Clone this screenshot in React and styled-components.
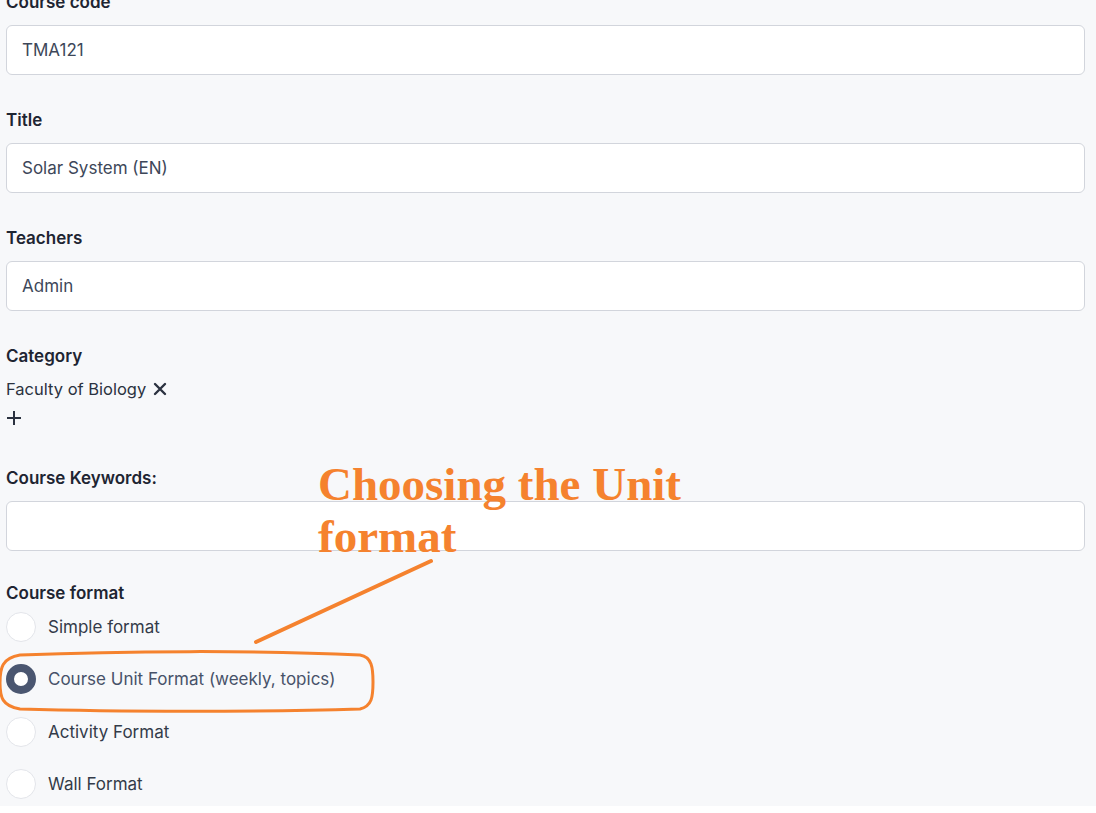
import React from 'react';
import styled, { createGlobalStyle } from 'styled-components';

const GlobalStyle = createGlobalStyle`
  html, body {
    margin: 0;
    padding: 0;
    background: #ffffff;
  }
  body {
    font-family: Inter, "Noto Sans", "Liberation Sans", sans-serif;
  }
`;

const Page = styled.div`
  position: relative;
  height: 806px;
  overflow: hidden;
  background: #f7f8fa;
`;

const Form = styled.div`
  display: flex;
  flex-direction: column;
  gap: 33px;
  margin-top: -10px;
  padding: 0 11px 0 6px;
`;

const Field = styled.div`
  display: flex;
  flex-direction: column;
  gap: ${(p) => p.gap || 11}px;
  margin-top: ${(p) => p.shift || 0}px;
`;

const Label = styled.div`
  font-size: 17px;
  line-height: 24px;
  font-weight: 600;
  color: #1e2532;
`;

const Input = styled.div`
  box-sizing: border-box;
  height: 50px;
  display: flex;
  align-items: center;
  padding: 0 15px;
  background: #ffffff;
  border: 1px solid #d2d5dc;
  border-radius: 6px;
  font-size: 17px;
  color: #3d4759;
`;

const Tag = styled.div`
  display: flex;
  align-items: center;
  gap: 7px;
  font-size: 16.5px;
  line-height: 22px;
  color: #2b3240;
`;

const IconButton = styled.span`
  display: inline-flex;
  color: #2b3240;
`;

const Radios = styled.div`
  display: flex;
  flex-direction: column;
  gap: 22.4px;
`;

const RadioRow = styled.label`
  display: flex;
  align-items: center;
  gap: 12px;
  font-size: 17px;
  color: ${(p) => (p.checked ? '#475269' : '#333b49')};
`;

const Circle = styled.span`
  box-sizing: border-box;
  width: 30px;
  height: 30px;
  border-radius: 50%;
  background: #ffffff;
  border: ${(p) => (p.checked ? '8px solid #4a5670' : '1px solid #e3e5ea')};
`;

const Note = styled.div`
  position: absolute;
  left: 318px;
  top: 458px;
  font-family: "Liberation Serif", "Times New Roman", serif;
  font-weight: 700;
  font-size: 47px;
  line-height: 52px;
  color: #f5822e;
`;

const Overlay = styled.svg`
  position: absolute;
  left: 0;
  top: 0;
  pointer-events: none;
`;

const Cross = () => (
  <svg width="14" height="14" viewBox="0 0 14 14">
    <path d="M2 2 L12 12 M12 2 L2 12" stroke="currentColor" strokeWidth="2.4" strokeLinecap="round" />
  </svg>
);

const Plus = () => (
  <svg width="16" height="16" viewBox="0 0 16 16">
    <path d="M8 1 V15 M1 8 H15" stroke="currentColor" strokeWidth="2" />
  </svg>
);

const formats = [
  { name: 'Simple format', checked: false },
  { name: 'Course Unit Format (weekly, topics)', checked: true },
  { name: 'Activity Format', checked: false },
  { name: 'Wall Format', checked: false },
];

function App() {
  return (
    <Page>
      <GlobalStyle />
      <Form>
        <Field>
          <Label>Course code</Label>
          <Input>TMA121</Input>
        </Field>
        <Field>
          <Label>Title</Label>
          <Input>Solar System (EN)</Input>
        </Field>
        <Field>
          <Label>Teachers</Label>
          <Input>Admin</Input>
        </Field>
        <Field gap={10}>
          <Label>Category</Label>
          <Tag>
            Faculty of Biology
            <IconButton><Cross /></IconButton>
          </Tag>
          <IconButton><Plus /></IconButton>
        </Field>
        <Field shift={7}>
          <Label>Course Keywords:</Label>
          <Input />
        </Field>
        <Field gap={7} shift={-3}>
          <Label>Course format</Label>
          <Radios>
            {formats.map((f) => (
              <RadioRow key={f.name} checked={f.checked}>
                <Circle checked={f.checked} />
                {f.name}
              </RadioRow>
            ))}
          </Radios>
        </Field>
      </Form>

      <Note>
        Choosing the Unit
        <br />
        format
      </Note>

      <Overlay width="1096" height="806">
        <path d="M431 561 L256 642" stroke="#f5822e" strokeWidth="4" strokeLinecap="round" />
        <path
          d="M20 655 C120 651 260 650 360 655 C372 657 373 668 373 682 C373 697 372 706 360 709 C260 712 120 712 20 709 C2 706 0 697 0 683 C0 668 2 658 20 655 Z"
          fill="none"
          stroke="#f5822e"
          strokeWidth="3"
        />
      </Overlay>
    </Page>
  );
}

export default App;
